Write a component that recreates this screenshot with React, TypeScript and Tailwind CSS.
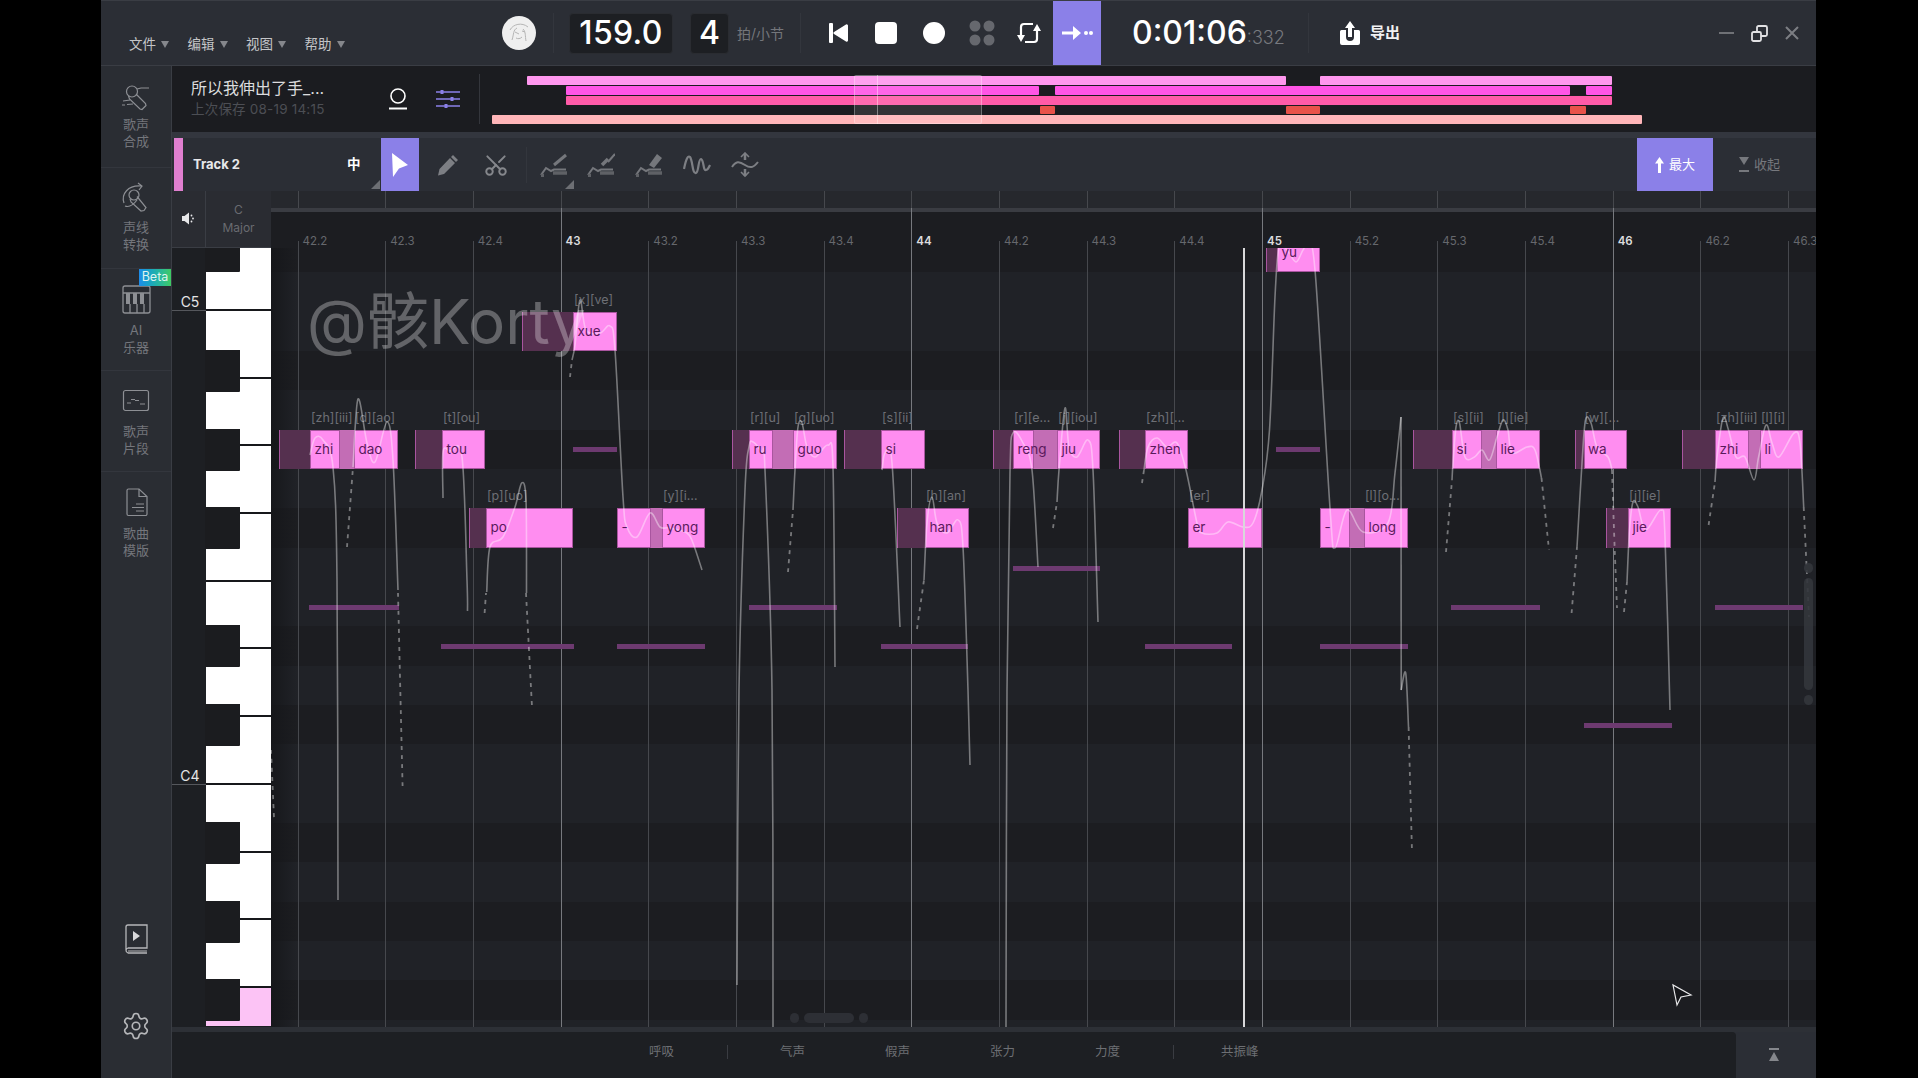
import { Scissors, Settings } from "lucide-react";

type Seg = { k: "pre" | "note" | "conn"; a: number; b: number; r: number; t?: string; l?: string };

const rowTop = (r: number) => 311.5 + 39.35 * r;

const SEGS: Seg[] = [
  { k: "pre", a: 279, b: 310, r: 3 },
  { k: "conn", a: 340, b: 354, r: 3 },
  { k: "note", a: 310, b: 340, r: 3, t: "zhi", l: "[zh][iii]" },
  { k: "note", a: 354, b: 397.5, r: 3, t: "dao", l: "[d][ao]" },
  { k: "pre", a: 415, b: 442, r: 3 },
  { k: "note", a: 442, b: 485, r: 3, t: "tou", l: "[t][ou]" },
  { k: "pre", a: 469, b: 486, r: 5 },
  { k: "note", a: 486, b: 573, r: 5, t: "po", l: "[p][uo]" },
  { k: "pre", a: 522, b: 573, r: 0 },
  { k: "note", a: 573, b: 617, r: 0, t: "xue", l: "[x][ve]" },
  { k: "conn", a: 651, b: 662, r: 5 },
  { k: "note", a: 617, b: 651, r: 5, t: "-" },
  { k: "note", a: 662, b: 705, r: 5, t: "yong", l: "[y][i…" },
  { k: "pre", a: 732, b: 749, r: 3 },
  { k: "conn", a: 773, b: 793, r: 3 },
  { k: "note", a: 749, b: 773, r: 3, t: "ru", l: "[r][u]" },
  { k: "note", a: 793, b: 837, r: 3, t: "guo", l: "[g][uo]" },
  { k: "pre", a: 843.5, b: 881, r: 3 },
  { k: "note", a: 881, b: 925, r: 3, t: "si", l: "[s][ii]" },
  { k: "pre", a: 897, b: 925, r: 5 },
  { k: "note", a: 925, b: 969, r: 5, t: "han", l: "[h][an]" },
  { k: "pre", a: 993, b: 1013, r: 3 },
  { k: "conn", a: 1034, b: 1057, r: 3 },
  { k: "note", a: 1013, b: 1034, r: 3, t: "reng", l: "[r][e…" },
  { k: "note", a: 1057, b: 1100, r: 3, t: "jiu", l: "[j][iou]" },
  { k: "pre", a: 1119, b: 1145, r: 3 },
  { k: "note", a: 1145, b: 1188, r: 3, t: "zhen", l: "[zh][…" },
  { k: "note", a: 1188, b: 1262, r: 5, t: "er", l: "[er]" },
  { k: "pre", a: 1266, b: 1277, r: -2 },
  { k: "note", a: 1277, b: 1320, r: -2, t: "yu" },
  { k: "conn", a: 1350, b: 1364, r: 5 },
  { k: "note", a: 1320, b: 1350, r: 5, t: "-" },
  { k: "note", a: 1364, b: 1407.5, r: 5, t: "long", l: "[l][o…" },
  { k: "pre", a: 1413, b: 1452, r: 3 },
  { k: "conn", a: 1482, b: 1496, r: 3 },
  { k: "note", a: 1452, b: 1482, r: 3, t: "si", l: "[s][ii]" },
  { k: "note", a: 1496, b: 1539.5, r: 3, t: "lie", l: "[l][ie]" },
  { k: "pre", a: 1575, b: 1583.5, r: 3 },
  { k: "note", a: 1583.5, b: 1627, r: 3, t: "wa", l: "[w][…" },
  { k: "pre", a: 1605.5, b: 1628, r: 5 },
  { k: "note", a: 1628, b: 1671, r: 5, t: "jie", l: "[j][ie]" },
  { k: "pre", a: 1682, b: 1715, r: 3 },
  { k: "conn", a: 1749, b: 1760, r: 3 },
  { k: "note", a: 1715, b: 1749, r: 3, t: "zhi", l: "[zh][iii]" },
  { k: "note", a: 1760, b: 1803, r: 3, t: "li", l: "[l][i]" },
];

// original pitch shadows: [x0, x1, y]
const SHADOWS = [
  [309, 399, 605], [441, 573.5, 644], [573, 617, 447], [617, 705, 644], [749, 837, 605],
  [881, 968, 644], [1013, 1100, 566], [1144.5, 1232, 644], [1276, 1320, 447], [1320, 1408, 644],
  [1451, 1539.5, 605], [1584, 1672, 723], [1715, 1803, 605],
];

const TICKS = [
  "42.2", "42.3", "42.4", "43", "43.2", "43.3", "43.4", "44", "44.2", "44.3", "44.4", "45", "45.2", "45.3", "45.4", "46", "46.2", "46.3",
];
const tickX = (i: number) => 297.5 + 87.68 * i;

type Pt = [number, number];

const SOLID: Pt[][] = [
  [[310, 455], [315, 438], [323, 440], [333, 467], [337, 580], [338, 900]],
  [[353, 467], [358, 399], [367, 443], [375, 462], [387, 422], [393, 460], [398, 590]],
  [[443, 498], [443, 452], [450, 451], [462, 457], [467, 580], [467.5, 611]],
  [[486.7, 592], [490, 547], [503, 537], [515, 507], [521.7, 483], [526, 500], [526.5, 593]],
  [[572, 360], [575, 345], [580, 300], [586, 330], [600, 333], [610, 326], [615, 350], [623, 497], [627, 527], [637, 537], [650, 513], [660, 527], [670, 528], [687, 533], [693, 543], [702, 570]],
  [[737, 985], [739, 690], [745, 490], [749, 447], [753, 442], [762, 453], [765, 470], [772, 690], [773, 1027]],
  [[793, 510], [795, 470], [798, 427], [802, 423], [807, 447], [815, 457], [828, 445], [833, 467], [835, 667]],
  [[882, 470], [885, 453], [892, 463], [900, 627]],
  [[924, 580], [927, 523], [932, 497], [937, 523], [947, 533], [958, 520], [963, 547], [968, 690], [970, 765]],
  [[1006, 1027], [1007, 690], [1010, 473], [1013, 433], [1023, 443], [1032, 470], [1038, 567]],
  [[1057, 502], [1059, 470], [1065, 408], [1069, 447], [1077, 457], [1088, 440], [1093, 470], [1098, 622]],
  [[1144, 470], [1148, 447], [1157, 438], [1167, 447], [1177, 443], [1186, 470], [1197, 523], [1202, 533], [1217, 533], [1228, 522], [1243, 527], [1253, 523], [1262, 490], [1269.5, 430], [1275, 297], [1279, 247], [1287, 250], [1296, 262], [1303, 250], [1307, 247], [1315, 270], [1330, 508], [1335, 548], [1347, 510], [1363, 532], [1388, 523], [1395, 473], [1401, 417]],
  [[1401, 417], [1401.2, 690]],
  [[1401.2, 690], [1405.7, 673], [1408.5, 727]],
  [[1452, 480], [1453, 463], [1456, 427], [1459.5, 423], [1465, 457], [1474.5, 457], [1482, 450], [1489.6, 460], [1497, 437], [1503, 420], [1508, 430], [1512, 453], [1527, 447], [1535, 450], [1541.5, 478]],
  [[1577, 547], [1582, 463], [1585.5, 420], [1591, 423], [1597, 447], [1608, 457], [1612, 470]],
  [[1627, 582], [1629.5, 530], [1633, 502], [1638, 507], [1645.7, 530], [1661, 510], [1665, 537], [1670, 710]],
  [[1715, 482], [1717, 457], [1723, 418], [1728.5, 430], [1736, 457], [1745, 457], [1754, 480], [1758.6, 457], [1766, 425], [1772, 443], [1779, 457], [1794, 433], [1800, 443], [1803.7, 507]],
];

const DASHED: Pt[][] = [
  [[347, 547], [353, 467]],
  [[398, 593], [402.6, 787]],
  [[484.6, 613], [486, 593]],
  [[526, 593], [532, 707]],
  [[570, 377], [572, 360]],
  [[788, 572], [793, 510]],
  [[917, 629], [924, 580]],
  [[1053, 528], [1057, 502]],
  [[1142, 483], [1144, 470]],
  [[1408.6, 727], [1412, 852]],
  [[1446, 552], [1452, 480]],
  [[1541.5, 478], [1549, 550]],
  [[1571.6, 613], [1577, 547]],
  [[1612, 470], [1614, 530], [1617, 608]],
  [[1624, 612], [1627, 582]],
  [[1708.6, 525], [1715, 482]],
  [[1803.7, 507], [1809, 617]],
  [[271, 750], [274, 818]],
];

// catmull-rom through the points
function smooth(p: Pt[]) {
  let d = `M${p[0][0]} ${p[0][1]}`;
  for (let i = 0; i < p.length - 1; i++) {
    const p0 = p[Math.max(i - 1, 0)];
    const p1 = p[i];
    const p2 = p[i + 1];
    const p3 = p[Math.min(i + 2, p.length - 1)];
    const c1 = [p1[0] + (p2[0] - p0[0]) / 6, p1[1] + (p2[1] - p0[1]) / 6];
    const c2 = [p2[0] - (p3[0] - p1[0]) / 6, p2[1] - (p3[1] - p1[1]) / 6];
    d += ` C${c1[0]} ${c1[1]} ${c2[0]} ${c2[1]} ${p2[0]} ${p2[1]}`;
  }
  return d;
}

const BLACK_ROWS = [-2, 1, 3, 5, 8, 10, 13, 15, 17];
const ROLL_ROWS = Array.from({ length: 22 }, (_, i) => i - 3);

function Caret() {
  return (
    <svg width="8" height="7" viewBox="0 0 8 7" className="ml-[5px]">
      <path d="M0 0h8L4 7z" fill="#85878c" />
    </svg>
  );
}

function MicIcon() {
  return (
    <svg width="34" height="34" viewBox="0 0 34 34" fill="none" stroke="#8d8f94" strokeWidth="1.2" className="translate-y-[2px]">
      <circle cx="13" cy="10.5" r="5.5" />
      <path d="M9.500 15l1 3 10.500 10 2 .5 4-4-.5-2L17 13" />
      <path d="M18 8l4-1h8M4 20l7-1M8 23.500l6-.5M3 24h3" />
    </svg>
  );
}

function ConvertIcon() {
  return (
    <svg width="34" height="34" viewBox="0 0 34 34" fill="none" stroke="#8d8f94" strokeWidth="1.2">
      <circle cx="15" cy="14" r="5" />
      <path d="M11 18l1 3 10 9 3-.5 2-3-9-11" />
      <path d="M5 22C2 13 9 4 22 5M19 2l4 3-3 4" />
      <path d="M6 25c5 2 9-2 12-6" />
    </svg>
  );
}

function PianoIcon() {
  return (
    <svg width="34" height="34" viewBox="0 0 34 34" fill="none" stroke="#8d8f94" strokeWidth="1.3">
      <rect x="4" y="4" width="27" height="27" rx="2" />
      <path d="M4 11h27M11 22v9M18 22v9M25 22v9" />
      <path d="M7 11h4v11H7zM14 11h4v11h-4zM21 11h4v11h-4z" fill="#8d8f94" stroke="none" />
    </svg>
  );
}

function ClipIcon() {
  return (
    <svg width="34" height="34" viewBox="0 0 34 34" fill="none" stroke="#8d8f94" strokeWidth="1.2">
      <rect x="4.5" y="6.5" width="25" height="20" rx="2" />
      <path d="M8 19h4M12 15.5h4M16 16.5h4M21 20h5" />
    </svg>
  );
}

function DocIcon() {
  return (
    <svg width="34" height="34" viewBox="0 0 34 34" fill="none" stroke="#8d8f94" strokeWidth="1.2">
      <path d="M8 5.5a1.5 1.5 0 0 1 1.5-1.5H20l8 7.5V29a1.5 1.5 0 0 1-1.5 1.5h-17A1.5 1.5 0 0 1 8 29z" />
      <path d="M20 4v7.5h8M17 19h8M13 22.5h12M17 26h8" />
    </svg>
  );
}

function BookIcon() {
  return (
    <svg width="26" height="30" viewBox="0 0 26 30" fill="none" stroke="#b6b7ba" strokeWidth="1.3">
      <path d="M3 26V3a2 2 0 0 1 2-2h19v23H5a3 3 0 0 0-2 2 3 3 0 0 0 2 3h19" />
      <path d="M5 27h19" strokeWidth="1" />
      <path d="M10 7l7 5-7 5z" fill="#d8d8da" stroke="none" />
    </svg>
  );
}

function PitchTool({ kind }: { kind: number }) {
  return (
    <svg width="28" height="24" viewBox="0 0 28 24" fill="none">
      <path d="M1 22l5-7 5 3 3-1.500h12" stroke="#75777c" strokeWidth="2" />
      <path d="M13 20h14M1 22.500h3" stroke="#5f6166" strokeWidth="3.500" />
      {kind === 0 && <path d="M14 12L26 2" stroke="#75777c" strokeWidth="3" />}
      {kind === 1 && (
        <>
          <path d="M15 12l6-6" stroke="#75777c" strokeWidth="3.500" />
          <path d="M21 9L28 1" stroke="#75777c" strokeWidth="2" />
        </>
      )}
      {kind === 2 && <path d="M14 12l5 3 8-10-5-4z" fill="#75777c" />}
    </svg>
  );
}

function ToolCorner() {
  return (
    <svg width="9" height="9" viewBox="0 0 9 9" className="absolute bottom-[2px] right-0">
      <path d="M9 0v9H0z" fill="#6d6f74" />
    </svg>
  );
}

const SIDE_ITEMS = [
  { icon: <MicIcon />, a: "歌声", b: "合成", g: "mt-[3px]" },
  { icon: <ConvertIcon />, a: "声线", b: "转换", g: "mt-[4px]" },
  { icon: <PianoIcon />, a: "AI", b: "乐器", g: "mt-[6px]", beta: true },
  { icon: <ClipIcon />, a: "歌声", b: "片段", g: "mt-[5px]" },
  { icon: <DocIcon />, a: "歌曲", b: "模版", g: "mt-[6px]", last: true },
];

function Sidebar() {
  return (
    <div className="flex w-[71px] shrink-0 flex-col border-r border-[#3a3d44] bg-[#2a2d33] pb-[37px]">
      {SIDE_ITEMS.map((it) => (
        <div
          key={it.a + it.b}
          className={`relative flex h-[101.5px] flex-col items-center pt-[13px] text-[13px] leading-[17px] text-[#74767c] ${it.last ? "" : "border-b border-[#33363d]"}`}
        >
          {it.beta && (
            <span className="absolute right-0 top-0 flex h-[17px] w-[32px] items-center justify-center bg-gradient-to-r from-[#1f8be8] to-[#3fca62] text-[12.5px] leading-none text-[#dff3f0]">
              Beta
            </span>
          )}
          <div className="flex h-[34px] items-center justify-center">{it.icon}</div>
          <div className={it.g}>{it.a}</div>
          <div>{it.b}</div>
        </div>
      ))}
      <div className="mt-auto flex flex-col items-center gap-[57px]">
        <BookIcon />
        <Settings size={30} strokeWidth={1.3} color="#b6b7ba" />
      </div>
    </div>
  );
}

function TopBar() {
  return (
    <div className="flex h-[66px] shrink-0 items-center border-y border-t-[#3a3d44] border-b-[#3a3d44] bg-[#2b2e35] pr-[17px]">
      <div className="flex w-[401px] items-center gap-[14px] pl-[28px] pt-[22px] text-[13.5px] text-[#c4c5c8]">
        {["文件", "编辑", "视图", "帮助"].map((m) => (
          <div key={m} className="flex w-[44.500px] items-center whitespace-nowrap">
            {m}
            <Caret />
          </div>
        ))}
      </div>
      <svg width="34" height="34" viewBox="0 0 34 34" className="shrink-0">
        <circle cx="17" cy="17" r="17" fill="#efefef" />
        <path d="M8 14c3-6 12-8 18-3M10 24c2-6 1-10 5-12M24 25c-1-5 0-9-3-12M13 16l4 2M20 15l3 1M14 22c2 1 4 1 6-1" stroke="#b5b5b5" strokeWidth="1" fill="none" />
      </svg>
      <div className="ml-[17px] h-[40px] w-px bg-[#33363d]" />
      <div className="ml-[15px] flex h-[41px] w-[104px] items-center justify-center rounded-[4px] border border-[#2a2c31] bg-[#1d1f23] text-[32px] font-medium tracking-[0.3px] text-white">
        159.0
      </div>
      <div className="ml-[17px] flex h-[41px] w-[39px] items-center justify-center rounded-[4px] border border-[#2a2c31] bg-[#1d1f23] text-[32px] font-medium text-white">
        4
      </div>
      <div className="ml-[8px] w-[47px] whitespace-nowrap text-[14px] text-[#74767b]">拍/小节</div>
      <div className="ml-[16px] h-[40px] w-px bg-[#33363d]" />
      <svg width="19" height="20" viewBox="0 0 19 20" className="ml-[28px]">
        <rect width="4" height="20" rx="1" fill="#fff" />
        <path d="M17 1.500a1.300 1.300 0 0 1 2 1v15a1.300 1.300 0 0 1-2 1L5 11a1.200 1.200 0 0 1 0-2z" fill="#fff" />
      </svg>
      <div className="ml-[27px] h-[22px] w-[22px] rounded-[4px] bg-white" />
      <div className="ml-[26px] h-[22px] w-[22px] rounded-full bg-white" />
      <svg width="26" height="26" viewBox="0 0 26 26" className="ml-[24px]">
        <circle cx="6" cy="6" r="5.500" fill="#66686e" />
        <circle cx="20" cy="6" r="5.500" fill="#66686e" />
        <circle cx="6" cy="20" r="5.500" fill="#66686e" />
        <circle cx="20" cy="20" r="5.500" fill="#66686e" />
      </svg>
      <svg width="26" height="24" viewBox="0 0 26 24" className="ml-[21px]" fill="none" stroke="#fff" strokeWidth="2.200">
        <path d="M5 15V6a3 3 0 0 1 3-3h9" />
        <path d="M21 9v9a3 3 0 0 1-3 3H9" />
        <path d="M1 14h8l-4 7zM17 10h8l-4-7z" fill="#fff" stroke="none" />
      </svg>
      <div className="ml-[11px] flex h-full w-[48px] items-center justify-center bg-[#8b80e8]">
        <svg width="31" height="18" viewBox="0 0 31 18" fill="#fff">
          <path d="M0 7.500h11V2l8 7-8 7v-5.500H0z" />
          <circle cx="24" cy="9" r="2" />
          <circle cx="29" cy="9" r="2" />
        </svg>
      </div>
      <div className="ml-[31px] flex w-[176px] items-baseline whitespace-nowrap text-[32px] font-medium text-white">
        0:01:06<span className="text-[18px] font-light text-[#77797e]">:332</span>
      </div>
      <div className="h-[40px] w-px bg-[#33363d]" />
      <svg width="20" height="24" viewBox="0 0 20 24" className="ml-[31px]" fill="#fff">
        <path d="M10 0l5 7h-3v9H8V7H5z" />
        <path d="M0 10.500A1.500 1.500 0 0 1 1.500 9H6v7a4 4 0 0 0 8 0V9h4.500a1.500 1.500 0 0 1 1.500 1.500V22a2 2 0 0 1-2 2H2a2 2 0 0 1-2-2z" />
      </svg>
      <div className="ml-[10px] text-[15px] font-bold text-[#f2f2f3]">导出</div>
      <div className="ml-auto flex items-center gap-[17px]">
        <div className="h-[2.500px] w-[15px] bg-[#6f7176]" />
        <svg width="17" height="17" viewBox="0 0 17 17" fill="none" stroke="#e2e2e4" strokeWidth="1.800">
          <rect x="1" y="7" width="9" height="9" rx="1.500" />
          <path d="M6 7V2.500A1.500 1.500 0 0 1 7.500 1h7A1.500 1.500 0 0 1 16 2.500v7a1.500 1.500 0 0 1-1.500 1.500H10" />
        </svg>
        <svg width="14" height="14" viewBox="0 0 14 14" stroke="#7c7e83" strokeWidth="2">
          <path d="M1 1l12 12M13 1L1 13" />
        </svg>
      </div>
    </div>
  );
}

const OV_BARS = [
  { c: "bg-[#ff97ee]", y: 76, a: 527, b: 1286 },
  { c: "bg-[#ff97ee]", y: 76, a: 1320, b: 1612 },
  { c: "bg-[#ff55e6]", y: 86, a: 566, b: 1039 },
  { c: "bg-[#ff55e6]", y: 86, a: 1055, b: 1570 },
  { c: "bg-[#ff55e6]", y: 86, a: 1585.500, b: 1612 },
  { c: "bg-[#ff5ba8]", y: 96, a: 566, b: 1612 },
  { c: "bg-[#e8524a]", y: 105.500, a: 1040, b: 1055 },
  { c: "bg-[#e8524a]", y: 105.500, a: 1285.500, b: 1320 },
  { c: "bg-[#e8524a]", y: 105.500, a: 1570, b: 1585.500 },
  { c: "bg-[#ffb5b8]", y: 115, a: 492, b: 1642 },
];

function Overview() {
  return (
    <div className="flex h-[66px] shrink-0 bg-[#1b1c20]">
      <div className="flex w-[307px] shrink-0 items-center pl-[19px]">
        <div className="w-[197px] whitespace-nowrap">
          <div className="text-[16px] leading-[21px] text-[#dcdcde]">所以我伸出了手_...</div>
          <div className="text-[13.500px] leading-[21px] tracking-[0.2px] text-[#4c4e54]">上次保存 08-19 14:15</div>
        </div>
        <svg width="20" height="22" viewBox="0 0 20 22" fill="none" stroke="#fff" strokeWidth="1.600">
          <circle cx="10" cy="8" r="7" />
          <path d="M1 20.500h18" strokeWidth="2" />
        </svg>
        <svg width="24" height="20" viewBox="0 0 24 20" className="ml-[28px]" stroke="#8b80e8" strokeWidth="1.800">
          <path d="M0 3h24M0 10h24M0 17h24" opacity="0.750" />
          <path d="M6 1v4M16 8v4M10 15v4" strokeWidth="3" />
        </svg>
      </div>
      <div className="my-[8px] w-px bg-[#34363c]" />
      <div className="relative flex-1">
        {OV_BARS.map((b) => (
          <div
            key={`${b.y}-${b.a}`}
            className={`absolute h-[8.500px] rounded-[1px] ${b.c}`}
            style={{ left: b.a - 480, width: b.b - b.a, top: b.y - 66 }}
          />
        ))}
        <div className="absolute left-[374px] top-[9px] h-[49px] w-[128px] rounded-[2px] border border-white/30 bg-white/10" />
        <div className="absolute left-[397px] top-[9px] h-[49px] w-px bg-white/40" />
      </div>
    </div>
  );
}

function ToolBar() {
  return (
    <div className="flex h-[53px] shrink-0 items-center bg-[#2b2e35] pl-[2px]">
      <div className="h-full w-[9px] bg-[#e07fd0]" />
      <div className="ml-[10px] w-[154px] text-[13px] font-bold text-[#e8e8ea]">Track 2</div>
      <div className="relative flex h-full w-[33px] items-center text-[13.5px] font-bold text-white">
        中
        <ToolCorner />
      </div>
      <div className="ml-px flex h-full w-[38px] items-center justify-center bg-[#8b80e8]">
        <svg width="18" height="24" viewBox="0 0 18 24" fill="#fff">
          <path d="M1 0l16 12-9 3.500L2 24z" />
        </svg>
      </div>
      <svg width="22" height="22" viewBox="0 0 22 22" className="ml-[18px]" fill="#7d7f84">
        <path d="M16 1l5 5-2 2-5-5zM13 4l5 5L7 20l-6 1.500L2.500 15z" />
      </svg>
      <Scissors size={26} strokeWidth={1.800} color="#85878c" className="ml-[24px] -rotate-90" />
      <div className="ml-[17px] h-[36px] w-px bg-[#33363d]" />
      <div className="relative ml-[13px] flex h-full w-[34px] items-center">
        <PitchTool kind={0} />
        <ToolCorner />
      </div>
      <div className="ml-[13px]">
        <PitchTool kind={1} />
      </div>
      <div className="ml-[20px]">
        <PitchTool kind={2} />
      </div>
      <svg width="28" height="24" viewBox="0 0 28 24" className="ml-[20px]" fill="none" stroke="#7d7f84" strokeWidth="2.200">
        <path d="M1 16C3 6 5 2 7 4c3 4 2 17 6 16 3-1 2-14 5-14 3 1 2 12 5 11 2 0 3-3 4-5" />
      </svg>
      <svg width="28" height="26" viewBox="0 0 28 26" className="ml-[20px]" fill="none" stroke="#7d7f84" strokeWidth="2">
        <path d="M1 15c4-6 7-6 13-2s9 2 13-3" />
        <path d="M14 8V2M14 24v-7" strokeWidth="2.500" />
        <path d="M10 5l4-4 4 4M10 20l4 4 4-4" strokeWidth="1.600" />
      </svg>
      <div className="ml-auto flex h-full w-[76px] items-center justify-center gap-[5px] bg-[#8b80e8] text-[13px] text-white">
        <svg width="9" height="16" viewBox="0 0 9 16" fill="#fff">
          <path d="M4.500 0L9 6.500H6V16H3V6.500H0z" />
        </svg>
        最大
      </div>
      <div className="ml-[26px] flex w-[77px] items-center gap-[5px] text-[13px] text-[#76787d]">
        <svg width="10" height="16" viewBox="0 0 10 16" fill="#76787d">
          <path d="M0 0h10L5 8zM0 13h10v2H0z" />
        </svg>
        收起
      </div>
    </div>
  );
}

function Keys() {
  return (
    <div className="flex h-[779px] bg-[#1d1f23]">
      <div className="flex w-[34px] shrink-0 flex-col text-[14px] leading-[16px] text-[#e4e4e6]">
        <div className="flex h-[63px] items-end justify-center border-b border-[#55575c] pl-[2px]">C5</div>
        <div className="flex h-[474px] items-end justify-center border-b border-[#55575c] pl-[2px]">C4</div>
      </div>
      <div className="relative flex w-[65px] flex-col">
        <div className="h-[63px] border-b-2 border-[#17181b] bg-white" />
        {Array.from({ length: 10 }, (_, i) => (
          <div key={i} className="h-[67.700px] border-b-2 border-[#17181b] bg-white" />
        ))}
        <div className="h-[38px] bg-[#fcc3f5]" />
        {BLACK_ROWS.map((r) => (
          <div
            key={r}
            className="absolute -left-[1px] w-[35px] rounded-br-[1px] bg-[#1b1c1f]"
            style={{ top: Math.max(rowTop(r) - 248 - 1, 0), height: r < 0 ? 24 : 42 }}
          />
        ))}
      </div>
    </div>
  );
}

function KeyHead() {
  return (
    <div className="flex h-[57px] border-b border-[#3a3d44] bg-[#2a2c32]">
      <div className="flex w-[34px] items-center justify-center border-r border-[#3a3d44] pb-[1px]">
        <svg width="13" height="13" viewBox="0 0 13 13" fill="#e8e8ea">
          <path d="M0 4h2.500L7 .5v12L2.500 9H0z" />
          <circle cx="9.500" cy="3.500" r="0.900" />
          <circle cx="11" cy="6.500" r="0.900" />
          <circle cx="9.500" cy="9.500" r="0.900" />
        </svg>
      </div>
      <div className="flex flex-1 flex-col items-center justify-center gap-[3px] pb-[1px] text-[12px] leading-[15px] text-[#696b70]">
        <div>C</div>
        <div>Major</div>
      </div>
    </div>
  );
}

function Roll() {
  return (
    <div className="relative flex flex-1 flex-col overflow-hidden">
      <div className="h-[17px] shrink-0 bg-[#26282d]" />
      <div className="h-[4px] shrink-0 bg-[#3a3c42]" />
      <div className="h-[36px] shrink-0 bg-[#1c1d21]" />
      {/* rows follow the keys: dark on black key rows */}
      <div className="relative flex-1 overflow-hidden">
        {ROLL_ROWS.map((r) => (
          <div
            key={r}
            className={`absolute left-0 h-[40px] w-full ${BLACK_ROWS.includes(r) ? "bg-[#1c1d21]" : "bg-[#202227]"}`}
            style={{ top: rowTop(r) - 248 }}
          />
        ))}
        <div className="absolute inset-y-0 left-0 w-[26px] bg-gradient-to-r from-[#141518] to-transparent opacity-80" />
      </div>
      {/* vertical beat lines */}
      {TICKS.map((t, i) => {
        const bar = !t.includes(".");
        return (
          <div key={t}>
            <div className="absolute top-0 h-[17px] w-px bg-[#46484d]" style={{ left: tickX(i) - 271 }} />
            <div
              className={`absolute bottom-0 w-px ${bar ? "top-[17px] bg-[#77797e]" : "top-[50px] bg-[#46484d]"}`}
              style={{ left: tickX(i) - 271 }}
            />
            <div
              className={`absolute top-[43px] text-[11.500px] leading-[14px] ${bar ? "font-semibold text-[#dcdcde]" : "text-[#66686d]"}`}
              style={{ left: tickX(i) - 271 + 5 }}
            >
              {t}
            </div>
          </div>
        );
      })}
      {/* notes live on a free canvas, origin at 271,248 */}
      <div className="absolute bottom-0 left-0 right-0 top-[57px] overflow-hidden">
        {SHADOWS.map(([a, b, y]) => (
          <div
            key={`${a}-${y}`}
            className="absolute h-[5px] bg-[#6d3a70]"
            style={{ left: a - 271, width: b - a, top: y - 248 }}
          />
        ))}
        {SEGS.map((s) => (
          <div
            key={`${s.a}-${s.r}`}
            className={`absolute h-[39.500px] border-[#a9559f] ${
              s.k === "pre"
                ? "border-l bg-[#55304f]"
                : s.k === "conn"
                  ? "bg-[#c36db5]"
                  : "border bg-[#ff8df0]"
            }`}
            style={{ left: s.a - 271, width: s.b - s.a, top: rowTop(s.r) - 248 }}
          >
            {s.t && (
              <span className="absolute left-[3.500px] top-[11px] z-10 whitespace-nowrap text-[13.500px] leading-[15px] text-[#5a1a5c]">{s.t}</span>
            )}
            {s.l && (
              <span className="absolute -top-[21px] left-0 whitespace-nowrap text-[12.500px] leading-[15px] text-[#6d6f75]">{s.l}</span>
            )}
          </div>
        ))}
        <svg width="1545" height="779" viewBox="271 248 1545 779" className="absolute left-0 top-0" fill="none" stroke="#ffffff" strokeOpacity="0.4" strokeWidth="1.600">
          {SOLID.map((p, i) => (
            <path key={i} d={smooth(p)} />
          ))}
          {DASHED.map((p, i) => (
            <path key={i} d={smooth(p)} strokeDasharray="4 5" strokeWidth="1.800" />
          ))}
          <path d="M1673 985l4 20 4-8 10-2z" fill="#15161a" stroke="#e8e8ea" strokeOpacity="1" strokeWidth="1.200" />
        </svg>
        <div className="absolute left-[972px] top-0 h-full w-[1.500px] bg-[#d8d8da]" />
        <div className="absolute left-[36px] top-[34px] whitespace-nowrap text-[62px] font-normal leading-[80px] text-white/30">@骸Korty</div>
        {/* scrollbars */}
        <div className="absolute left-[1532px] top-[315px] flex w-[10px] flex-col items-center gap-[5px] opacity-90">
          <div className="h-[10px] w-[9px] rounded-full bg-[#33363c]" />
          <div className="h-[112px] w-[9px] rounded-full bg-[#33363c]" />
          <div className="h-[10px] w-[9px] rounded-full bg-[#33363c]" />
        </div>
        <div className="absolute left-[519px] top-[765px] flex h-[10px] items-center gap-[5px]">
          <div className="h-[10px] w-[9px] rounded-full bg-[#2d2f35]" />
          <div className="h-[10px] w-[50px] rounded-full bg-[#2d2f35]" />
          <div className="h-[10px] w-[9px] rounded-full bg-[#2d2f35]" />
        </div>
      </div>
    </div>
  );
}

function BottomBar() {
  const tabs = [
    { t: "呼吸", w: "ml-[477px]" },
    { t: "气声", w: "ml-[52px]", sep: true },
    { t: "假声", w: "ml-[80px]" },
    { t: "张力", w: "ml-[80px]" },
    { t: "力度", w: "ml-[80px]" },
    { t: "共振峰", w: "ml-[47px]", sep: true },
  ];
  return (
    <div className="flex h-[46px] shrink-0 bg-[#2b2e35]">
      <div className="flex w-[1564px] items-center rounded-tr-[4px] bg-[#1d1f23] pb-[6px] text-[12.500px] text-[#6d6f74]">
        {tabs.map((x) => (
          <div key={x.t} className="flex items-center">
            {x.sep && <div className="ml-[53px] h-[14px] w-px bg-[#3a3c42]" />}
            <div className={`${x.w} whitespace-nowrap`}>{x.t}</div>
          </div>
        ))}
      </div>
      <div className="flex flex-1 items-center justify-center pb-[2px] pr-[4px]">
        <svg width="10" height="13" viewBox="0 0 10 13" fill="#85878c">
          <path d="M0 0h10v2H0zM5 4l5 9H0z" />
        </svg>
      </div>
    </div>
  );
}

export default function App() {
  return (
    <div className="flex h-[1078px] w-[1918px] overflow-hidden bg-black pl-[101px] pr-[102px] font-['Inter','Noto_Sans_CJK_SC',sans-serif]">
      <div className="flex w-full flex-col">
        <TopBar />
        <div className="flex min-h-0 flex-1">
          <Sidebar />
          <div className="flex min-w-0 flex-1 flex-col">
            <Overview />
            <div className="h-[6px] shrink-0 bg-[#33363e]" />
            <ToolBar />
            <div className="flex h-[836px] shrink-0">
              <div className="flex w-[99px] shrink-0 flex-col">
                <KeyHead />
                <Keys />
              </div>
              <Roll />
            </div>
            <div className="h-[5px] shrink-0 bg-[#2d3036]" />
            <BottomBar />
          </div>
        </div>
      </div>
    </div>
  );
}
